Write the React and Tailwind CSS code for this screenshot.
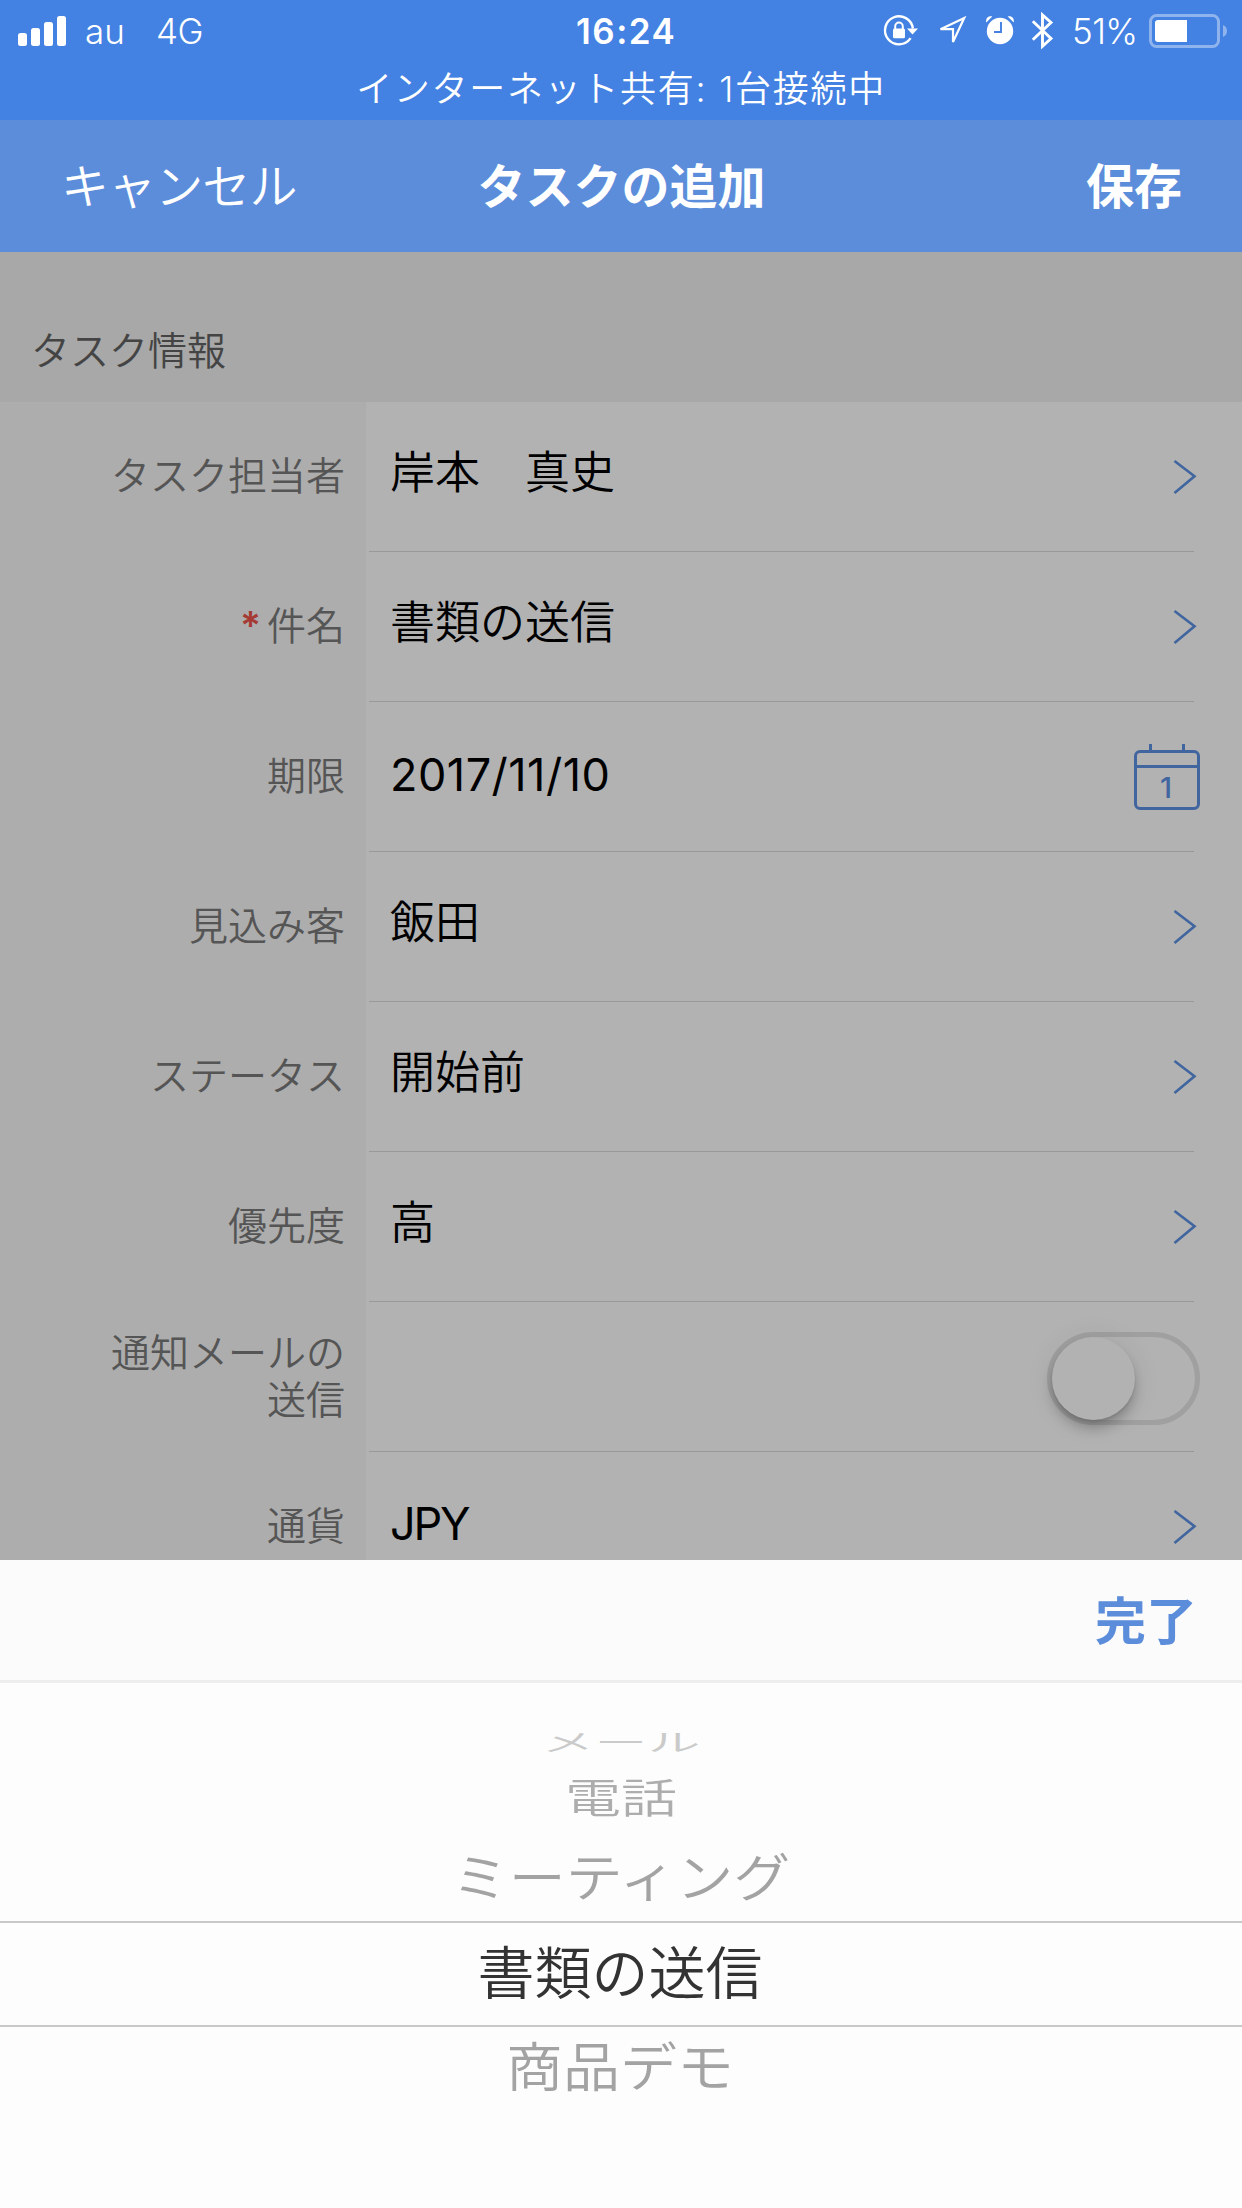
const rows = [
  { label: 'タスク担当者', value: '岸本　真史', kind: 'chevron' },
  { label: '件名', value: '書類の送信', kind: 'chevron', required: true },
  { label: '期限', value: '2017/11/10', kind: 'date' },
  { label: '見込み客', value: '飯田', kind: 'chevron' },
  { label: 'ステータス', value: '開始前', kind: 'chevron' },
  { label: '優先度', value: '高', kind: 'chevron' },
  { label: '通知メールの送信', value: '', kind: 'switch' },
  { label: '通貨', value: 'JPY', kind: 'chevron', code: true },
];

function valueClass(row) {
  if (row.kind === 'date') return 'pb-[4px] text-[45px] leading-[54px] font-normal tracking-[0.5px] text-black';
  if (row.code) return 'pb-[6px] text-[45px] leading-[54px] font-normal tracking-[-2.2px] text-black';
  return 'pb-[7px] text-[45px] leading-[54px] text-black';
}

function Signal() {
  return (
    <svg className="h-[30px] w-[48px]" viewBox="0 0 48 30" fill="#fff">
      <rect x="0" y="17" width="9" height="13" rx="2.5" />
      <rect x="13" y="12" width="9" height="18" rx="2.5" />
      <rect x="26" y="6" width="9" height="24" rx="2.5" />
      <rect x="39" y="0" width="9" height="30" rx="2.5" />
    </svg>
  );
}

function StatusIcons() {
  return (
    <svg className="h-[40px] w-[172px]" viewBox="882 11 172 40" fill="none" stroke="#fff">
      <path d="M910.6 38.2A14 14 0 1 1 912.9 28.5" strokeWidth="2.4" />
      <path d="M907 28.600h11l-5.500 6z" fill="#fff" stroke="none" />
      <rect x="893" y="28.500" width="12" height="9.800" rx="1.500" fill="#fff" stroke="none" />
      <path d="M895.200 29v-2.500a3.800 4 0 0 1 7.600 0V29" strokeWidth="2" />
      <path d="M940.500 29.200L964.200 18L953 42L953 29.200Z" strokeWidth="2.200" />
      <circle cx="1000" cy="31" r="13.200" fill="#fff" stroke="none" />
      <path d="M986.300 22.500c-1-4 2-7 6-6zM1013.700 22.500c1-4-2-7-6-6z" fill="#fff" stroke="none" />
      <path d="M1001 22v10h-7" stroke="#4380e2" strokeWidth="1.900" />
      <path d="M1032.800 21.200L1051 38.500L1042.500 46.200V15L1051 22.500L1032.800 39.800" strokeWidth="2.900" />
    </svg>
  );
}

function Battery() {
  return (
    <svg className="h-[34px] w-[78px]" viewBox="0 0 78 34">
      <rect x="1.500" y="1.500" width="68" height="31" rx="6" fill="none" stroke="#fff" strokeOpacity=".4" strokeWidth="3" />
      <path d="M38 6H9a3 3 0 0 0-3 3v16a3 3 0 0 0 3 3h29z" fill="#fff" />
      <path d="M74 11a6.500 6.500 0 0 1 0 12z" fill="#fff" fillOpacity=".4" />
    </svg>
  );
}

function Chevron() {
  return (
    <svg className="mr-[45px] h-[36px] w-[24px]" viewBox="0 0 24 36" fill="none" stroke="#40659f" strokeWidth="2.6">
      <path d="M1.500 2L21.500 17.300L1.500 34" />
    </svg>
  );
}

function Calendar() {
  return (
    <svg className="mr-[42px] h-[66px] w-[66px]" viewBox="0 0 66 66" fill="none" stroke="#40659f" strokeWidth="3">
      <rect x="1.500" y="7.500" width="63" height="57" rx="4.500" />
      <path d="M1 22.500h64M16.500 0v7M49.500 0v7" />
      <text x="32" y="54" textAnchor="middle" fontFamily="Inter" fontSize="29" fontWeight="500" fill="#40659f" stroke="none">1</text>
    </svg>
  );
}

function Switch() {
  return (
    <div className="mt-[3px] mr-[42px] h-[93px] w-[153px] rounded-full border-[5px] border-[#a0a0a0]">
      <div className="h-[83px] w-[83px] rounded-full bg-[#b2b2b2] shadow-[0_9px_12px_rgba(0,0,0,0.2),0_2px_3px_rgba(0,0,0,0.1),0_2px_30px_rgba(0,0,0,0.08)]" />
    </div>
  );
}

function Row({ row, last }) {
  return (
    <div className={last ? 'flex h-[108px] overflow-hidden' : 'flex h-[150px]'}>
      <div className="flex h-[150px] w-[366px] shrink-0 items-center justify-end bg-[#adadad] pr-[21px] pb-[3px] text-[39px] leading-[47px] text-[#555]">
        {row.required && <span className="mr-[6px] text-[39px] font-semibold text-[#a63a35]">*</span>}
        <span className="text-right">
          {row.kind === 'switch' ? <>通知メールの<br />送信</> : row.label}
        </span>
      </div>
      <div className="flex h-[150px] flex-1 flex-col pl-[3px]">
        <div className="flex flex-1 items-center justify-between pl-[21px]">
          <span className={valueClass(row)}>{row.value}</span>
          {row.kind === 'chevron' && <Chevron />}
          {row.kind === 'date' && <Calendar />}
          {row.kind === 'switch' && <Switch />}
        </div>
        {!last && <div className="mr-[48px] h-px bg-[#999]" />}
      </div>
    </div>
  );
}

export default function App() {
  return (
    <div className="flex h-[2208px] w-[1242px] flex-col overflow-hidden bg-[#b2b2b2] font-['Inter','Noto_Sans_CJK_JP',sans-serif] font-[350] whitespace-nowrap">
      <header className="h-[120px] shrink-0 bg-[#4381e2] text-white">
        <div className="flex h-[62px] items-center pl-[18px] text-[35px] leading-[44px]">
          <div className="flex w-[558px] items-center">
            <Signal />
            <span className="ml-[19px] w-[71px]">au</span>
            <span className="tracking-[-0.5px]">4G</span>
          </div>
          <span className="w-[306px] font-semibold tracking-[1.5px]">16:24</span>
          <StatusIcons />
          <span className="ml-[18px] w-[77px] tracking-[-0.6px]">51%</span>
          <Battery />
        </div>
        <div className="text-center text-[36px] leading-[54px] tracking-[1.7px]">インターネット共有: 1台接続中</div>
      </header>

      <nav className="flex h-[132px] shrink-0 items-center justify-between bg-[#5c8ddb] pt-[1px] pr-[60px] pl-[61px] text-[48px] leading-[58px] text-white">
        <span className="w-[360px] tracking-[-0.9px]">キャンセル</span>
        <span className="font-bold">タスクの追加</span>
        <span className="w-[360px] text-right font-bold">保存</span>
      </nav>

      <main className="h-[1308px] shrink-0 overflow-hidden bg-[#b2b2b2]">
        <h2 className="h-[150px] bg-[#a8a8a8] pt-[75px] pl-[31px] text-[39px] leading-[48px] font-[350] text-[#444]">タスク情報</h2>
        {rows.map((row, i) => (
          <Row key={row.label} row={row} last={i === rows.length - 1} />
        ))}
      </main>

      <section className="flex h-[648px] shrink-0 flex-col bg-[#fdfdfd]">
        <div className="flex h-[123px] shrink-0 items-center justify-end border-b-[3px] border-[#eee] bg-[#fbfbfb] pt-[3px] pr-[45px]">
          <button className="text-[51px] leading-[60px] font-bold text-[#5c8ddb]">完了</button>
        </div>
        <div className="mt-[47px] flex flex-1 flex-col overflow-hidden text-[57px] leading-[60px] text-[#a3a3a3]">
          <div className="flex h-[24px] shrink-0 items-center justify-center text-[53px] text-[#cacaca]"><span className="scale-y-[.46]">メール</span></div>
          <div className="flex h-[92px] shrink-0 items-center justify-center pb-[4px] text-[56px] text-[#adadad]"><span className="scale-y-[.74]">電話</span></div>
          <div className="flex h-[75px] shrink-0 items-center justify-center pb-[9px]"><span className="scale-y-[.92]">ミーティング</span></div>
          <div className="flex h-[106px] shrink-0 items-center justify-center border-y-2 border-[#c9c9c9] pr-[2px] text-[#333]">書類の送信</div>
          <div className="flex h-[82px] shrink-0 items-center justify-center pr-[2px]"><span className="scale-y-[.94]">商品デモ</span></div>
        </div>
      </section>
    </div>
  );
}
